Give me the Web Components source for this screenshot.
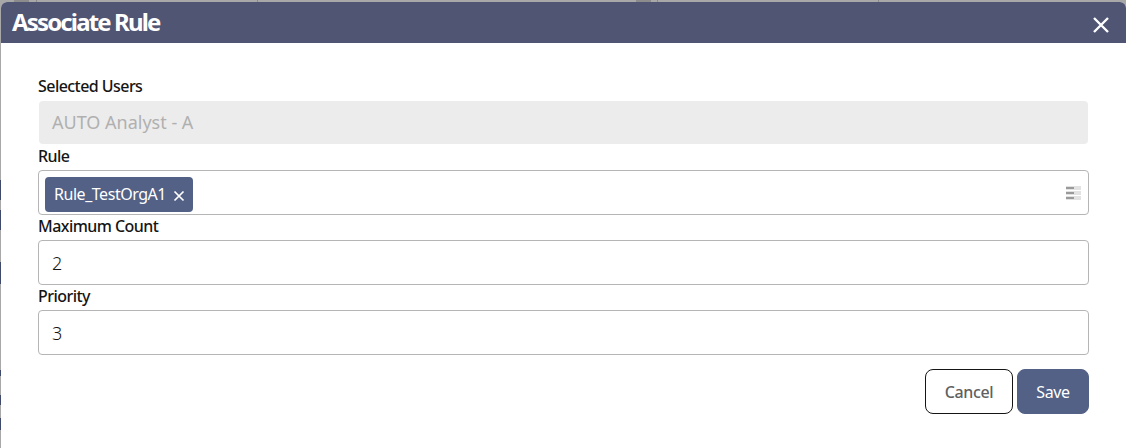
<!DOCTYPE html>
<html lang="en">
<head>
<meta charset="UTF-8">
<title>Associate Rule</title>
<style>
  html, body { margin: 0; height: 100%; overflow: hidden; background: #a8a8a8; }
  body { font-family: "Noto Sans", "Open Sans", sans-serif; }
</style>
</head>
<body>
<rule-dialog heading="Associate Rule">
  <form-field label="Selected Users"><text-box value="AUTO Analyst - A" disabled></text-box></form-field>
  <form-field label="Rule">
    <tag-select><tag-chip>Rule_TestOrgA1</tag-chip></tag-select>
  </form-field>
  <form-field label="Maximum Count"><text-box value="2"></text-box></form-field>
  <form-field label="Priority"><text-box value="3"></text-box></form-field>
  <div slot="actions">
    <dialog-button>Cancel</dialog-button>
    <dialog-button primary>Save</dialog-button>
  </div>
</rule-dialog>

<script>
  const dialogTpl = document.createElement('template');
  dialogTpl.innerHTML = `
  <style>
    :host { display: block; position: absolute; inset: 0; overflow: hidden; background: #a8a8a8; }
    .line { position: absolute; top: 0; width: 1px; height: 2px; background: #8a8a8a; }
    .knob { position: absolute; top: 0; width: 15px; height: 2px; background: #8c8c8c; }
    .edge { position: absolute; left: 0; width: 1px; background: #3f4a6b; }
    .box { position: absolute; left: 1px; right: 0; top: 2px; bottom: 0; background: #fff;
           border-radius: 6px 6px 0 0; display: flex; flex-direction: column; }
    header { height: 41px; flex: none; background: #505573; color: #fff; border-radius: 6px 6px 0 0;
             display: flex; align-items: center; justify-content: space-between; padding: 0 16px 0 11px; }
    h1 { margin: 0; font: 700 24px/1 "Noto Sans", sans-serif; letter-spacing: -1.85px; position: relative; top: -1px; }
    svg { display: block; margin-top: 4px; }
    main { padding: 32px 37px 0 37px; display: flex; flex-direction: column; }
    .actions { margin-top: 14px; }
  </style>
  <i class="line" style="left:36px"></i><i class="line" style="left:257px"></i>
  <i class="line" style="left:657px"></i><i class="line" style="left:878px"></i>
  <i class="knob" style="left:14px"></i><i class="knob" style="left:636px"></i>
  <i class="edge" style="top:180px;height:20px"></i><i class="edge" style="top:210px;height:20px"></i>
  <i class="edge" style="top:262px;height:22px"></i><i class="edge" style="top:370px;height:6px"></i>
  <i class="edge" style="top:395px;height:10px"></i><i class="edge" style="top:418px;height:12px"></i>
  <section class="box" role="dialog">
    <header>
      <h1></h1>
      <svg width="18" height="18" viewBox="0 0 18 18" fill="none" stroke="#fff" stroke-width="2.4"><path d="M2 2 L16 16 M16 2 L2 16"/></svg>
    </header>
    <main>
      <slot></slot>
      <div class="actions"><slot name="actions"></slot></div>
    </main>
  </section>`;
  class RuleDialog extends HTMLElement {
    constructor() {
      super();
      this.attachShadow({ mode: 'open' }).appendChild(dialogTpl.content.cloneNode(true));
      this.shadowRoot.querySelector('h1').textContent = this.getAttribute('heading');
    }
  }
  customElements.define('rule-dialog', RuleDialog);

  const fieldTpl = document.createElement('template');
  fieldTpl.innerHTML = `
  <style>
    :host { display: block; }
    label { display: block; height: 25px; font: 500 16px/23px "Noto Sans", sans-serif; color: #161513; letter-spacing: -0.55px; }
  </style>
  <label></label><slot></slot>`;
  class FormField extends HTMLElement {
    constructor() {
      super();
      this.attachShadow({ mode: 'open' }).appendChild(fieldTpl.content.cloneNode(true));
      this.shadowRoot.querySelector('label').textContent = this.getAttribute('label');
    }
  }
  customElements.define('form-field', FormField);

  const boxTpl = document.createElement('template');
  boxTpl.innerHTML = `
  <style>
    :host { display: block; box-sizing: border-box; height: 45px; border: 1px solid #b5b5b5; border-radius: 4px;
            padding: 0 13px; font: 300 18px/44px "Noto Sans", sans-serif; color: #161513; background: #fff; }
    :host([disabled]) { height: 43px; margin: 1px 1px 1px 1px; border: 0; background: #ececec; color: #b0b0b0; font-weight: 400; line-height: 43px; }
  </style>
  <span></span>`;
  class TextBox extends HTMLElement {
    constructor() {
      super();
      this.attachShadow({ mode: 'open' }).appendChild(boxTpl.content.cloneNode(true));
      this.shadowRoot.querySelector('span').textContent = this.getAttribute('value');
    }
  }
  customElements.define('text-box', TextBox);

  const selectTpl = document.createElement('template');
  selectTpl.innerHTML = `
  <style>
    :host { display: flex; box-sizing: border-box; height: 45px; border: 1px solid #b5b5b5; border-radius: 4px;
            padding: 6px 6px 0 6px; justify-content: space-between; background: #fff; }
    .menu { width: 15px; height: 15px; margin: 9px 1px 0 0; }
    svg { display: block; }
  </style>
  <div><slot></slot></div>
  <svg class="menu" viewBox="0 0 15 15">
    <rect x="0" y="0" width="15" height="4" fill="#e2e2e2"/><rect x="0" y="1" width="8" height="2" fill="#9a9a9a"/>
    <rect x="0" y="5" width="15" height="4" fill="#e2e2e2"/><rect x="0" y="6" width="8" height="2" fill="#9a9a9a"/>
    <rect x="0" y="10" width="15" height="4" fill="#e2e2e2"/><rect x="0" y="11" width="8" height="2" fill="#9a9a9a"/>
  </svg>`;
  class TagSelect extends HTMLElement {
    constructor() {
      super();
      this.attachShadow({ mode: 'open' }).appendChild(selectTpl.content.cloneNode(true));
    }
  }
  customElements.define('tag-select', TagSelect);

  const chipTpl = document.createElement('template');
  chipTpl.innerHTML = `
  <style>
    :host { display: inline-flex; align-items: center; box-sizing: border-box; height: 35px; padding: 0 8px 0 9px;
            background: #526185; color: #fff; border-radius: 4px; font: 400 16px/35px "Noto Sans", sans-serif; letter-spacing: -0.46px; }
    svg { margin-left: 7px; display: block; margin-top: 2px; }
  </style>
  <slot></slot>
  <svg width="12" height="12" viewBox="0 0 12 12" fill="none" stroke="#fff" stroke-width="1.7"><path d="M1.5 1.5 L10.5 10.5 M10.5 1.5 L1.5 10.5"/></svg>`;
  class TagChip extends HTMLElement {
    constructor() {
      super();
      this.attachShadow({ mode: 'open' }).appendChild(chipTpl.content.cloneNode(true));
    }
  }
  customElements.define('tag-chip', TagChip);

  const btnTpl = document.createElement('template');
  btnTpl.innerHTML = `
  <style>
    :host { display: inline-flex; align-items: center; justify-content: center; box-sizing: border-box; height: 45px;
            width: 88px; border: 1px solid #161513; border-radius: 8px; background: #fff; color: #5f5f5f;
            font: 500 16px/1 "Noto Sans", sans-serif; letter-spacing: -0.35px; }
    :host([primary]) { width: 72px; margin-left: 4px; border-color: #526185; background: #526185; color: #fff; font-weight: 400; }
  </style>
  <slot></slot>`;
  class DialogButton extends HTMLElement {
    constructor() {
      super();
      this.attachShadow({ mode: 'open' }).appendChild(btnTpl.content.cloneNode(true));
    }
  }
  customElements.define('dialog-button', DialogButton);

  document.querySelector('[slot=actions]').style.cssText = 'display:flex;justify-content:flex-end';
</script>
</body>
</html>
